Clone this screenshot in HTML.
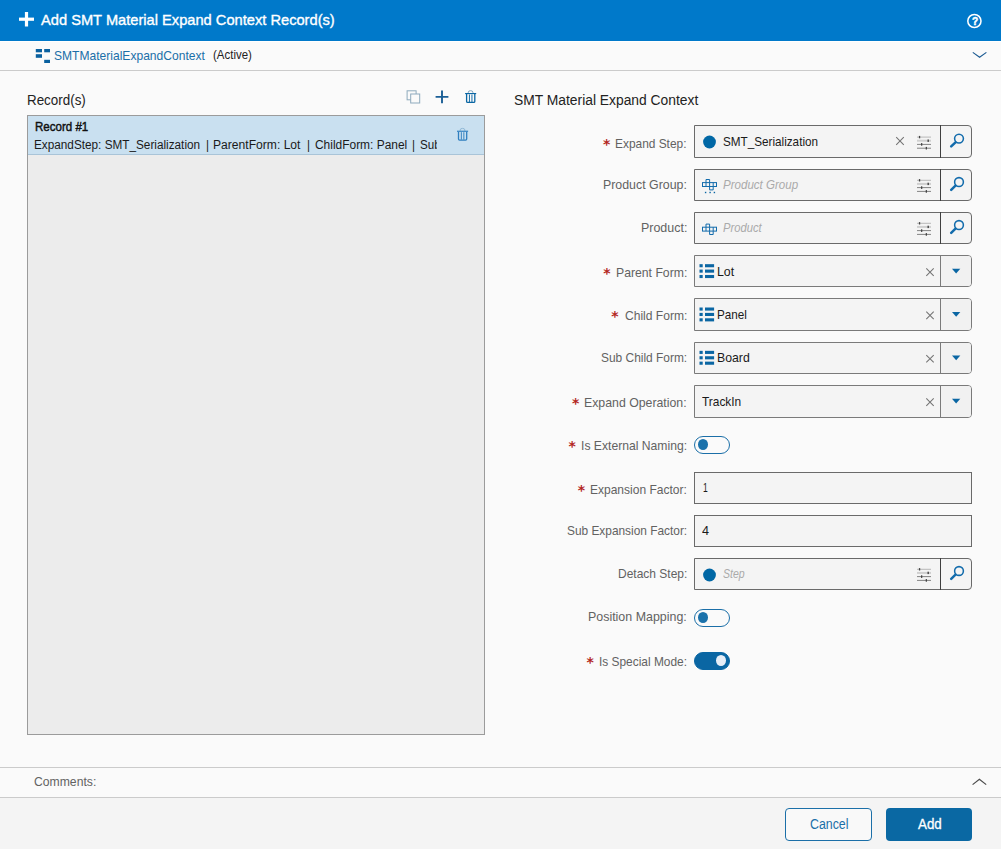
<!DOCTYPE html>
<html lang="en"><head><meta charset="utf-8"><title>Add SMT Material Expand Context Record(s)</title>
<style>
html,body{margin:0;padding:0}
body{width:1001px;height:849px;position:relative;overflow:hidden;background:#fafafa;font-family:'Liberation Sans',sans-serif}
.a{position:absolute;box-sizing:border-box}
.t{position:absolute;white-space:nowrap;transform-origin:0 0;display:block}
.hdr{left:0;top:0;width:1001px;height:41px;background:#0079ca}
.hl{left:0;width:1001px;height:1px;background:#cbcbcb}
.foot{left:0;top:798px;width:1001px;height:51px;background:#f4f4f4}
.panel{left:27px;top:115px;width:458px;height:620px;border:1px solid #9b9b9b;background:#ececec}
.rec{left:28px;top:116px;width:456px;height:39px;background:#c9e0f0;border-bottom:1px solid #a9c4d8}
.box{left:694px;width:278px;border:1px solid #6a6a6a;background:#f4f4f4}
.box.btn{border-radius:0 4px 4px 0}
.sep{width:1px;background:#6a6a6a;left:940px}
.tog{left:694px;width:36px;height:18px;border-radius:9px;border:1.4px solid #1b6fa8;background:#fafafa}
.tog.on{background:#0a66a3;border-color:#0a66a3}
.knob{width:10.4px;height:10.8px;border-radius:50%;background:#1b72ab}
.btnc{left:785px;top:808px;width:87px;height:33px;border:1px solid #1b6fa8;border-radius:4px;background:#f9f9f9}
.btna{left:886px;top:808px;width:86px;height:33px;border-radius:4px;background:#0a68a3}
svg{position:absolute;overflow:visible}
.ast{color:#b3261e}

</style></head>
<body>
<div class="a hdr"></div>
<div class="a" style="left:0;top:41px;width:1001px;height:1px;background:#fff"></div>
<div class="a hl" style="top:70px"></div>
<div class="a hl" style="top:767px"></div>
<div class="a hl" style="top:797px"></div>
<div class="a foot"></div>
<div class="a panel"></div>
<div class="a rec"></div>
<div class="a box btn" style="top:125px;height:33px;border-color:#6a6a6a"></div>
<div class="a sep" style="top:125px;height:33px;background:#3e3e3e"></div>
<div class="a box btn" style="top:169px;height:32px;border-color:#6a6a6a"></div>
<div class="a sep" style="top:169px;height:32px;background:#3e3e3e"></div>
<div class="a box btn" style="top:212px;height:32px;border-color:#6a6a6a"></div>
<div class="a sep" style="top:212px;height:32px;background:#3e3e3e"></div>
<div class="a box btn" style="top:255px;height:32px;border-color:#7a7a7a"></div>
<div class="a" style="left:941px;top:256px;width:30px;height:30px;background:#f1f1f1;border-radius:0 3px 3px 0"></div>
<div class="a sep" style="top:255px;height:32px;background:#7a7a7a"></div>
<div class="a box btn" style="top:298px;height:33px;border-color:#7a7a7a"></div>
<div class="a" style="left:941px;top:299px;width:30px;height:31px;background:#f1f1f1;border-radius:0 3px 3px 0"></div>
<div class="a sep" style="top:298px;height:33px;background:#7a7a7a"></div>
<div class="a box btn" style="top:342px;height:32px;border-color:#7a7a7a"></div>
<div class="a" style="left:941px;top:343px;width:30px;height:30px;background:#f1f1f1;border-radius:0 3px 3px 0"></div>
<div class="a sep" style="top:342px;height:32px;background:#7a7a7a"></div>
<div class="a box btn" style="top:385px;height:33px;border-color:#7a7a7a"></div>
<div class="a" style="left:941px;top:386px;width:30px;height:31px;background:#f1f1f1;border-radius:0 3px 3px 0"></div>
<div class="a sep" style="top:385px;height:33px;background:#7a7a7a"></div>
<div class="a box" style="top:472px;height:32px;border-color:#6a6a6a"></div>
<div class="a box" style="top:515px;height:32px;border-color:#6a6a6a"></div>
<div class="a box btn" style="top:558px;height:32px;border-color:#6a6a6a"></div>
<div class="a sep" style="top:558px;height:32px;background:#3e3e3e"></div>
<div class="a tog" style="top:436px"></div>
<div class="a knob" style="left:697.8px;top:439.3px"></div>
<div class="a tog" style="top:609px"></div>
<div class="a knob" style="left:697.8px;top:612.3px"></div>
<div class="a tog on" style="top:652px"></div>
<div class="a knob" style="left:715.8px;top:655.3px;background:#e6eef7"></div>
<div class="a btnc"></div><div class="a btna"></div>
<svg class="a" width="1001" height="849" viewBox="0 0 1001 849" style="left:0;top:0"><rect x="19" y="17.6" width="15" height="3.2" fill="#fff"/><rect x="24.9" y="12" width="3.2" height="14.5" fill="#fff"/>
<circle cx="974.4" cy="21" r="6.6" fill="none" stroke="#fff" stroke-width="1.55"/>
<polyline points="972.8,52.4 979.6,57.3 986.4,52.4" fill="none" stroke="#1b5a92" stroke-width="1.15"/>
<polyline points="972.6,784.6 979.4,779.2 986.2,784.6" fill="none" stroke="#4a4a4a" stroke-width="1.2"/>
<rect x="35.8" y="49.0" width="6.2" height="3.3" fill="#09609f"/>
<rect x="44.2" y="49.0" width="5.8" height="3.3" fill="#09609f"/>
<rect x="35.8" y="54.2" width="6.2" height="3.6" fill="#09609f"/>
<rect x="44.2" y="59.8" width="5.8" height="3.2" fill="#09609f"/>
<rect x="407.1" y="90.8" width="9" height="9" fill="none" stroke="#8eaabd" stroke-width="1"/>
<rect x="410.7" y="94" width="9" height="9" fill="#fafafa" stroke="#8eaabd" stroke-width="1"/>
<path d="M435.6 96.9H448.4M442 90.5V103.2" stroke="#1b5f96" stroke-width="1.9" fill="none"/>
<g transform="translate(0,0)" fill="none" stroke="#0a66a3"><path d="M468.3 93.1V92.2Q468.3 90.7 470.6 90.7Q472.9 90.7 472.9 92.2V93.1" stroke="#7fa6c2" stroke-width="1"/><path d="M465.1 93.55H476.2" stroke-width="1.15"/><path d="M466.6 94V101.4Q466.6 102.45 467.7 102.45H473.7Q474.8 102.45 474.8 101.4V94" stroke-width="1.3"/><path d="M469.45 94.5V102M471.95 94.5V102" stroke-width="0.95"/></g>
<g transform="translate(-8.1,37.7)" fill="none" stroke="#2f7fbf"><path d="M468.3 93.1V92.2Q468.3 90.7 470.6 90.7Q472.9 90.7 472.9 92.2V93.1" stroke="#8fb8d6" stroke-width="1"/><path d="M465.1 93.55H476.2" stroke-width="1.15"/><path d="M466.6 94V101.4Q466.6 102.45 467.7 102.45H473.7Q474.8 102.45 474.8 101.4V94" stroke-width="1.3"/><path d="M469.45 94.5V102M471.95 94.5V102" stroke-width="0.95"/></g>
<circle cx="709.5" cy="142" r="6.4" fill="#0067a5"/>
<circle cx="709.5" cy="575" r="6.4" fill="#0067a5"/>
<rect x="702.5" y="182.6" width="14" height="3.9" fill="none" stroke="#136cac" stroke-width="1"/><path d="M706 182.6V186.5" stroke="#136cac" stroke-width="1"/><path d="M709.6 182.6V186.5" stroke="#136cac" stroke-width="1"/><path d="M713.2 182.6V186.5" stroke="#136cac" stroke-width="1"/><path d="M706 182.6V179.5H709.6V182.6" fill="none" stroke="#136cac" stroke-width="1"/><path d="M709.6 186.5V189.9H713.2V186.5" fill="none" stroke="#136cac" stroke-width="1"/><rect x="704.9" y="191.8" width="1.4" height="1.4" fill="#0a66a3"/><rect x="709.4" y="191.8" width="1.4" height="1.4" fill="#0a66a3"/><rect x="713.6999999999999" y="191.8" width="1.4" height="1.4" fill="#0a66a3"/>
<rect x="702.5" y="227.2" width="14" height="3.9" fill="none" stroke="#136cac" stroke-width="1"/><path d="M706 227.2V231.1" stroke="#136cac" stroke-width="1"/><path d="M709.6 227.2V231.1" stroke="#136cac" stroke-width="1"/><path d="M713.2 227.2V231.1" stroke="#136cac" stroke-width="1"/><path d="M706 227.2V224.1H709.6V227.2" fill="none" stroke="#136cac" stroke-width="1"/><path d="M709.6 231.1V234.5H713.2V231.1" fill="none" stroke="#136cac" stroke-width="1"/>
<rect x="699.5" y="264.17" width="3.2" height="3.1" fill="#0a66a3"/><rect x="705" y="264.17" width="9.1" height="3.1" fill="#0a66a3"/>
<rect x="699.5" y="269.57" width="3.2" height="3.1" fill="#0a66a3"/><rect x="705" y="269.57" width="9.1" height="3.1" fill="#0a66a3"/>
<rect x="699.5" y="274.97" width="3.2" height="3.1" fill="#0a66a3"/><rect x="705" y="274.97" width="9.1" height="3.1" fill="#0a66a3"/>
<rect x="699.5" y="307.50" width="3.2" height="3.1" fill="#0a66a3"/><rect x="705" y="307.50" width="9.1" height="3.1" fill="#0a66a3"/>
<rect x="699.5" y="312.90" width="3.2" height="3.1" fill="#0a66a3"/><rect x="705" y="312.90" width="9.1" height="3.1" fill="#0a66a3"/>
<rect x="699.5" y="318.30" width="3.2" height="3.1" fill="#0a66a3"/><rect x="705" y="318.30" width="9.1" height="3.1" fill="#0a66a3"/>
<rect x="699.5" y="350.84" width="3.2" height="3.1" fill="#0a66a3"/><rect x="705" y="350.84" width="9.1" height="3.1" fill="#0a66a3"/>
<rect x="699.5" y="356.24" width="3.2" height="3.1" fill="#0a66a3"/><rect x="705" y="356.24" width="9.1" height="3.1" fill="#0a66a3"/>
<rect x="699.5" y="361.64" width="3.2" height="3.1" fill="#0a66a3"/><rect x="705" y="361.64" width="9.1" height="3.1" fill="#0a66a3"/>
<path d="M896.2 137.2L903.8 144.8M896.2 144.8L903.8 137.2" stroke="#747474" stroke-width="1.05" fill="none"/>
<path d="M926.3 268.3699L933.7 275.76989999999995M926.3 275.76989999999995L933.7 268.3699" stroke="#747474" stroke-width="1.05" fill="none"/>
<path d="M926.3 311.7032L933.7 319.10319999999996M926.3 319.10319999999996L933.7 311.7032" stroke="#747474" stroke-width="1.05" fill="none"/>
<path d="M926.3 355.0365L933.7 362.43649999999997M926.3 362.43649999999997L933.7 355.0365" stroke="#747474" stroke-width="1.05" fill="none"/>
<path d="M926.3 398.3698L933.7 405.7698M926.3 405.7698L933.7 398.3698" stroke="#747474" stroke-width="1.05" fill="none"/>
<path d="M917 137.10H931" stroke="#a8a8a8" stroke-width="0.8"/><rect x="918.9" y="135.90" width="1.3" height="2.4" fill="#444"/><path d="M917 140.70H931" stroke="#cfcfcf" stroke-width="2"/><rect x="927.5" y="139.50" width="1.4" height="2.4" fill="#444"/><path d="M917 144.40H931" stroke="#6e6e6e" stroke-width="0.85"/><rect x="921" y="143.10" width="1.3" height="2.6" fill="#444"/><path d="M917 148.20H931" stroke="#6e6e6e" stroke-width="0.85"/><rect x="925.7" y="146.90" width="1.3" height="2.6" fill="#444"/>
<path d="M917 180.30H931" stroke="#a8a8a8" stroke-width="0.8"/><rect x="918.9" y="179.10" width="1.3" height="2.4" fill="#444"/><path d="M917 183.90H931" stroke="#cfcfcf" stroke-width="2"/><rect x="927.5" y="182.70" width="1.4" height="2.4" fill="#444"/><path d="M917 187.60H931" stroke="#6e6e6e" stroke-width="0.85"/><rect x="921" y="186.30" width="1.3" height="2.6" fill="#444"/><path d="M917 191.40H931" stroke="#6e6e6e" stroke-width="0.85"/><rect x="925.7" y="190.10" width="1.3" height="2.6" fill="#444"/>
<path d="M917 223.30H931" stroke="#a8a8a8" stroke-width="0.8"/><rect x="918.9" y="222.10" width="1.3" height="2.4" fill="#444"/><path d="M917 226.90H931" stroke="#cfcfcf" stroke-width="2"/><rect x="927.5" y="225.70" width="1.4" height="2.4" fill="#444"/><path d="M917 230.60H931" stroke="#6e6e6e" stroke-width="0.85"/><rect x="921" y="229.30" width="1.3" height="2.6" fill="#444"/><path d="M917 234.40H931" stroke="#6e6e6e" stroke-width="0.85"/><rect x="925.7" y="233.10" width="1.3" height="2.6" fill="#444"/>
<path d="M917 569.30H931" stroke="#a8a8a8" stroke-width="0.8"/><rect x="918.9" y="568.10" width="1.3" height="2.4" fill="#444"/><path d="M917 572.90H931" stroke="#cfcfcf" stroke-width="2"/><rect x="927.5" y="571.70" width="1.4" height="2.4" fill="#444"/><path d="M917 576.60H931" stroke="#6e6e6e" stroke-width="0.85"/><rect x="921" y="575.30" width="1.3" height="2.6" fill="#444"/><path d="M917 580.40H931" stroke="#6e6e6e" stroke-width="0.85"/><rect x="925.7" y="579.10" width="1.3" height="2.6" fill="#444"/>
<circle cx="959" cy="138.60" r="4.4" fill="none" stroke="#136cac" stroke-width="1.55"/><path d="M955.5 142.30L951.2 146.40" stroke="#136cac" stroke-width="2.5" stroke-linecap="round"/>
<circle cx="959" cy="182.00" r="4.4" fill="none" stroke="#136cac" stroke-width="1.55"/><path d="M955.5 185.70L951.2 189.80" stroke="#136cac" stroke-width="2.5" stroke-linecap="round"/>
<circle cx="959" cy="225.00" r="4.4" fill="none" stroke="#136cac" stroke-width="1.55"/><path d="M955.5 228.70L951.2 232.80" stroke="#136cac" stroke-width="2.5" stroke-linecap="round"/>
<circle cx="959" cy="571.00" r="4.4" fill="none" stroke="#136cac" stroke-width="1.55"/><path d="M955.5 574.70L951.2 578.80" stroke="#136cac" stroke-width="2.5" stroke-linecap="round"/>
<polygon points="952,268.77 960.3,268.77 956.15,273.47" fill="#0a66a3"/>
<polygon points="952,312.10 960.3,312.10 956.15,316.80" fill="#0a66a3"/>
<polygon points="952,355.44 960.3,355.44 956.15,360.14" fill="#0a66a3"/>
<polygon points="952,398.77 960.3,398.77 956.15,403.47" fill="#0a66a3"/></svg>
<span class="t" style="left:41.30px;top:10px;font:normal 400 15px/20px 'Liberation Sans', sans-serif;color:#fff;transform:scaleX(0.9769);-webkit-text-stroke:0.35px #fff;">Add SMT Material Expand Context Record(s)</span>
<span class="t" style="left:54.00px;top:46px;font:normal 400 13px/20px 'Liberation Sans', sans-serif;color:#1b6fa8;transform:scaleX(0.9278);">SMTMaterialExpandContext</span>
<span class="t" style="left:212.70px;top:45px;font:normal 400 12.5px/20px 'Liberation Sans', sans-serif;color:#222;transform:scaleX(0.9170);">(Active)</span>
<span class="t" style="left:26.84px;top:90px;font:normal 400 14px/20px 'Liberation Sans', sans-serif;color:#222;transform:scaleX(0.9566);">Record(s)</span>
<span class="t" style="left:514.40px;top:90px;font:normal 400 14px/20px 'Liberation Sans', sans-serif;color:#222;transform:scaleX(0.9879);">SMT Material Expand Context</span>
<span class="t" style="left:34.78px;top:117px;font:normal 400 12.5px/20px 'Liberation Sans', sans-serif;color:#111;transform:scaleX(0.9238);-webkit-text-stroke:0.45px #111;">Record #1</span>
<span class="t" style="left:615.38px;top:134px;font:normal 400 13px/20px 'Liberation Sans', sans-serif;color:#626262;transform:scaleX(0.9157);">Expand Step:</span>
<span class="t" style="left:603.05px;top:175px;font:normal 400 13px/20px 'Liberation Sans', sans-serif;color:#626262;transform:scaleX(0.9510);">Product Group:</span>
<span class="t" style="left:640.54px;top:218px;font:normal 400 13px/20px 'Liberation Sans', sans-serif;color:#626262;transform:scaleX(0.9572);">Product:</span>
<span class="t" style="left:615.56px;top:263px;font:normal 400 13px/20px 'Liberation Sans', sans-serif;color:#626262;transform:scaleX(0.9402);">Parent Form:</span>
<span class="t" style="left:624.50px;top:306px;font:normal 400 13px/20px 'Liberation Sans', sans-serif;color:#626262;transform:scaleX(0.9284);">Child Form:</span>
<span class="t" style="left:600.70px;top:348px;font:normal 400 13px/20px 'Liberation Sans', sans-serif;color:#626262;transform:scaleX(0.9174);">Sub Child Form:</span>
<span class="t" style="left:584.25px;top:393px;font:normal 400 13px/20px 'Liberation Sans', sans-serif;color:#626262;transform:scaleX(0.9467);">Expand Operation:</span>
<span class="t" style="left:580.76px;top:436px;font:normal 400 13px/20px 'Liberation Sans', sans-serif;color:#626262;transform:scaleX(0.9354);">Is External Naming:</span>
<span class="t" style="left:590.08px;top:480px;font:normal 400 13px/20px 'Liberation Sans', sans-serif;color:#626262;transform:scaleX(0.9238);">Expansion Factor:</span>
<span class="t" style="left:566.70px;top:521px;font:normal 400 13px/20px 'Liberation Sans', sans-serif;color:#626262;transform:scaleX(0.9136);">Sub Expansion Factor:</span>
<span class="t" style="left:617.58px;top:564px;font:normal 400 13px/20px 'Liberation Sans', sans-serif;color:#626262;transform:scaleX(0.9219);">Detach Step:</span>
<span class="t" style="left:588.14px;top:607px;font:normal 400 13px/20px 'Liberation Sans', sans-serif;color:#626262;transform:scaleX(0.9555);">Position Mapping:</span>
<span class="t" style="left:598.88px;top:652px;font:normal 400 13px/20px 'Liberation Sans', sans-serif;color:#626262;transform:scaleX(0.9154);">Is Special Mode:</span>
<span class="t" style="left:34.36px;top:135px;font:normal 400 12.5px/20px 'Liberation Sans', sans-serif;color:#1a1a1a;transform:scaleX(0.9411);">ExpandStep: SMT_Serialization</span>
<span class="t" style="left:205.67px;top:135px;font:normal 400 12.5px/20px 'Liberation Sans', sans-serif;color:#1a1a1a;transform:scaleX(0.9300);">|</span>
<span class="t" style="left:213.23px;top:135px;font:normal 400 12.5px/20px 'Liberation Sans', sans-serif;color:#1a1a1a;transform:scaleX(0.9684);">ParentForm: Lot</span>
<span class="t" style="left:306.67px;top:135px;font:normal 400 12.5px/20px 'Liberation Sans', sans-serif;color:#1a1a1a;transform:scaleX(0.9300);">|</span>
<span class="t" style="left:315.00px;top:135px;font:normal 400 12.5px/20px 'Liberation Sans', sans-serif;color:#1a1a1a;transform:scaleX(0.9552);">ChildForm: Panel</span>
<span class="t" style="left:411.87px;top:135px;font:normal 400 12.5px/20px 'Liberation Sans', sans-serif;color:#1a1a1a;transform:scaleX(0.9300);">|</span>
<div class="a" style="left:419px;top:135px;width:18.30000000000001px;height:20px;overflow:hidden"><span class="t" style="left:1.00px;top:0;font:normal 400 12.5px/20px 'Liberation Sans', sans-serif;color:#1a1a1a;transform:scaleX(0.9300)">SubChildForm: Board</span></div>
<span class="t" style="left:723.00px;top:132px;font:normal 400 13px/20px 'Liberation Sans', sans-serif;color:#1a1a1a;transform:scaleX(0.9007);">SMT_Serialization</span>
<span class="t" style="left:723.20px;top:175px;font:italic 400 13px/20px 'Liberation Sans', sans-serif;color:#aaa;transform:scaleX(0.8883);">Product Group</span>
<span class="t" style="left:723.20px;top:218px;font:italic 400 13px/20px 'Liberation Sans', sans-serif;color:#aaa;transform:scaleX(0.8617);">Product</span>
<span class="t" style="left:717.25px;top:262px;font:normal 400 13px/20px 'Liberation Sans', sans-serif;color:#1a1a1a;transform:scaleX(0.9507);">Lot</span>
<span class="t" style="left:717.30px;top:305px;font:normal 400 13px/20px 'Liberation Sans', sans-serif;color:#1a1a1a;transform:scaleX(0.8992);">Panel</span>
<span class="t" style="left:717.26px;top:348px;font:normal 400 13px/20px 'Liberation Sans', sans-serif;color:#1a1a1a;transform:scaleX(0.9444);">Board</span>
<span class="t" style="left:702.20px;top:392px;font:normal 400 13px/20px 'Liberation Sans', sans-serif;color:#1a1a1a;transform:scaleX(0.9149);">TrackIn</span>
<span class="t" style="left:702.80px;top:478px;font:normal 400 13px/20px 'Liberation Sans', sans-serif;color:#1a1a1a;transform:scaleX(0.6571);">1</span>
<span class="t" style="left:702.10px;top:521px;font:normal 400 13px/20px 'Liberation Sans', sans-serif;color:#1a1a1a;transform:scaleX(0.9714);">4</span>
<span class="t" style="left:723.30px;top:564px;font:italic 400 13px/20px 'Liberation Sans', sans-serif;color:#aaa;transform:scaleX(0.8109);">Step</span>
<span class="t" style="left:971.50px;top:11px;font:normal 700 11.5px/20px 'Liberation Sans', sans-serif;color:#fff;transform:scaleX(0.8857);-webkit-text-stroke:0.5px #fff;">?</span>
<span class="t" style="left:34.40px;top:772px;font:normal 400 13px/20px 'Liberation Sans', sans-serif;color:#626262;transform:scaleX(0.9370);">Comments:</span>
<span class="t" style="left:809.60px;top:814px;font:normal 400 14px/20px 'Liberation Sans', sans-serif;color:#1b6fa8;transform:scaleX(0.8834);">Cancel</span>
<span class="t" style="left:918.00px;top:814px;font:normal 400 14px/20px 'Liberation Sans', sans-serif;color:#fff;transform:scaleX(0.9534);-webkit-text-stroke:0.3px #fff;">Add</span>
<span class="t ast" style="left:603.1px;top:134px;font:bold 14px/20px 'DejaVu Sans',sans-serif">*</span>
<span class="t ast" style="left:603.3px;top:263px;font:bold 14px/20px 'DejaVu Sans',sans-serif">*</span>
<span class="t ast" style="left:611.3px;top:306px;font:bold 14px/20px 'DejaVu Sans',sans-serif">*</span>
<span class="t ast" style="left:572.0px;top:393px;font:bold 14px/20px 'DejaVu Sans',sans-serif">*</span>
<span class="t ast" style="left:568.5px;top:436px;font:bold 14px/20px 'DejaVu Sans',sans-serif">*</span>
<span class="t ast" style="left:577.8px;top:480px;font:bold 14px/20px 'DejaVu Sans',sans-serif">*</span>
<span class="t ast" style="left:586.6px;top:652px;font:bold 14px/20px 'DejaVu Sans',sans-serif">*</span>
</body></html>
